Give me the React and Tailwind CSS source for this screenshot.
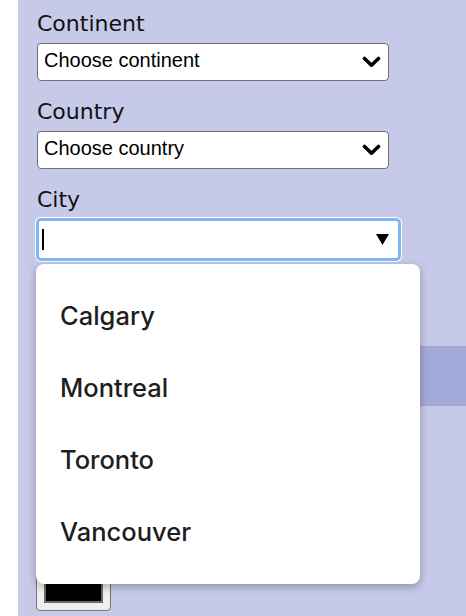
import React from "react";

function Chevron() {
  return (
    <svg width="19" height="12" viewBox="0 0 19 12" className="shrink-0">
      <polyline points="2.5,2.5 9.5,9.2 16.5,2.5" fill="none" stroke="#000" strokeWidth="3.6" strokeLinecap="round" strokeLinejoin="round" />
    </svg>
  );
}

function FakeSelect({ text }) {
  return (
    <div className="w-[352px] h-[38px] rounded-[4px] border border-[#727272] bg-white flex items-center justify-between pl-[6px] pr-[7px] pb-[4px]">
      <span className="text-[20px] text-black" style={{ fontFamily: '"Liberation Sans", Arial, sans-serif' }}>{text}</span>
      <span className="pt-[4px]"><Chevron /></span>
    </div>
  );
}

function Label({ children }) {
  return (
    <div className="text-[22px] leading-[26px] text-[#111]" style={{ fontFamily: '"DejaVu Sans", sans-serif' }}>
      {children}
    </div>
  );
}

export default function App() {
  const cities = ["Calgary", "Montreal", "Toronto", "Vancouver"];
  return (
    <div className="w-[466px] h-[616px] flex bg-white overflow-hidden">
      <div className="w-[18px] shrink-0 bg-white" />
      <div className="flex-1 bg-[#c6c9e8] relative flex flex-col pt-[11px]">
        <div className="pl-[19px] flex flex-col">
          <Label>Continent</Label>
          <div className="mt-[6px]"><FakeSelect text="Choose continent" /></div>
          <div className="mt-[18px]"><Label>Country</Label></div>
          <div className="mt-[6px]"><FakeSelect text="Choose country" /></div>
          <div className="mt-[18px]"><Label>City</Label></div>
        </div>
        <div className="pl-[17px] mt-[4px]">
          <div className="w-[367px] h-[45px] rounded-[6px] bg-white p-[1px]">
            <div className="h-full rounded-[5px] border-[3px] border-[#80b8f6] bg-white flex items-center justify-between pl-[3px] pr-[9px]">
              <div className="w-[2px] h-[21px] bg-black" />
              <svg width="13" height="11" viewBox="0 0 13 11">
                <polygon points="0,0 13,0 6.5,11" fill="#000" />
              </svg>
            </div>
          </div>
        </div>
        <div className="ml-[19px] mt-[84px] h-[60px] bg-[#a2a9d8]" />
        <div className="ml-[18px] mt-[161px] w-[75px] h-[44px] rounded-[4px] border border-[#767676] bg-[#efefef] p-[7px]">
          <div className="w-full h-full border-2 border-[#6b6b6b] bg-black" />
        </div>

        <div
          className="absolute left-[18px] top-[264px] w-[384px] h-[320px] rounded-[8px] bg-white py-4 shadow-[0_3px_8px_rgba(0,0,0,0.28)]"
          style={{ fontFamily: 'Inter, "Noto Sans", sans-serif' }}
        >
          {cities.map((c) => (
            <div key={c} className="h-[72px] flex items-center pl-6 text-[25.5px] font-medium text-[#1e1e20]">
              {c}
            </div>
          ))}
        </div>
      </div>
    </div>
  );
}
